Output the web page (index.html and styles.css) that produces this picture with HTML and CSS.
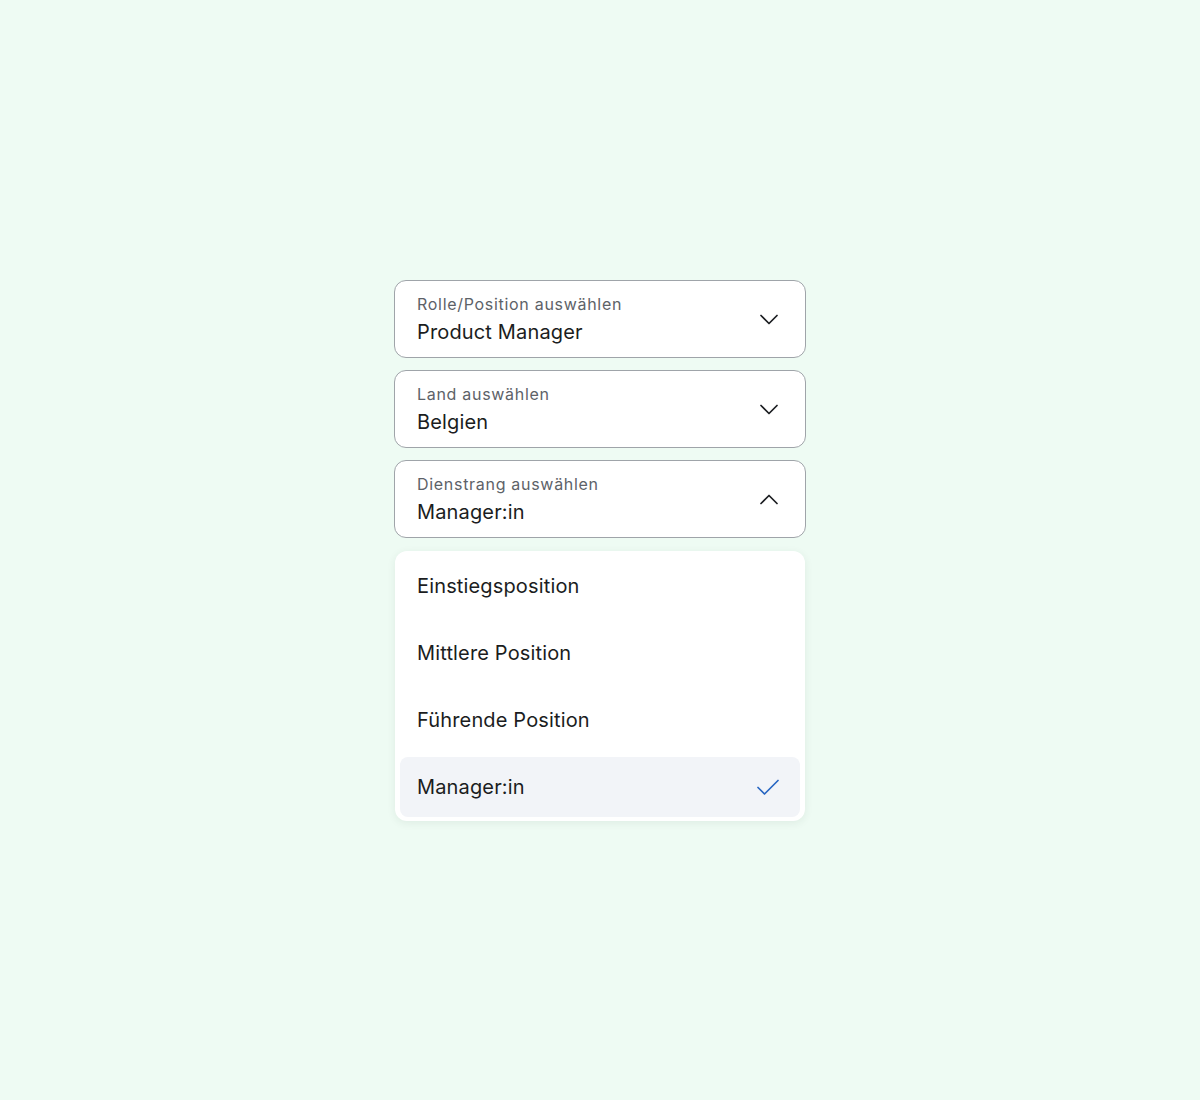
FILE: index.html
```html
<!DOCTYPE html>
<html lang="de">
<head>
    <meta charset="UTF-8">
    <meta name="viewport" content="width=device-width, initial-scale=1.0">
    <title>Auswahlfelder</title>
    <link rel="stylesheet" href="styles.css">
</head>
<body>
    <div class="form">
        <div class="select">
            <div class="select-text">
                <span class="label">Rolle/Position auswählen</span>
                <span class="value">Product Manager</span>
            </div>
            <svg class="chevron" viewBox="0 0 24 24" width="24" height="24"><path d="M4 8.5l8 8 8-8" /></svg>
        </div>

        <div class="select">
            <div class="select-text">
                <span class="label">Land auswählen</span>
                <span class="value">Belgien</span>
            </div>
            <svg class="chevron" viewBox="0 0 24 24" width="24" height="24"><path d="M4 8.5l8 8 8-8" /></svg>
        </div>

        <div class="select open">
            <div class="select-text">
                <span class="label">Dienstrang auswählen</span>
                <span class="value">Manager:in</span>
            </div>
            <svg class="chevron" viewBox="0 0 24 24" width="24" height="24"><path d="M4 16.5l8-8 8 8" /></svg>
        </div>

        <ul class="menu">
            <li class="option">Einstiegsposition</li>
            <li class="option">Mittlere Position</li>
            <li class="option">Führende Position</li>
            <li class="option selected">
                Manager:in
                <svg class="check" viewBox="0 0 24 24" width="24" height="24"><path d="M2 12.5l6.5 6.5L22 5.5" /></svg>
            </li>
        </ul>
    </div>
</body>
</html>
```

FILE: styles.css
```css
body {
    margin: 0;
    min-height: 100vh;
    display: flex;
    align-items: center;
    justify-content: center;
    background: #eefbf3;
    font-family: Inter, 'Noto Sans', sans-serif;
    color: #1b1d21;
}
.form {
    width: 412px;
    display: flex;
    flex-direction: column;
    gap: 12px;
}
.select {
    display: flex;
    align-items: center;
    justify-content: space-between;
    background: white;
    border: 1px solid #9fa4a9;
    border-radius: 12px;
    padding: 12px 24px 11px 22px;
}
.select-text {
    display: flex;
    flex-direction: column;
    gap: 3px;
}
.label {
    font-size: 16px;
    line-height: 22px;
    letter-spacing: 0.7px;
    color: #5d6268;
}
.value {
    font-size: 20px;
    line-height: 28px;
    letter-spacing: 0.15px;
}
.chevron {
    fill: none;
    stroke: #1b1d21;
    stroke-width: 1.7;
    stroke-linecap: round;
    stroke-linejoin: round;
}
.menu {
    list-style: none;
    margin: 1px 1px 0;
    padding: 5px 5px 4px;
    background: white;
    border-radius: 12px;
    box-shadow: 0 2px 8px rgba(40, 70, 55, 0.08);
    display: flex;
    flex-direction: column;
    gap: 7px;
}
.option {
    height: 60px;
    display: flex;
    align-items: center;
    justify-content: space-between;
    padding: 0 20px 0 17px;
    font-size: 20px;
    letter-spacing: 0.15px;
    border-radius: 8px;
}
.option.selected {
    background: #f2f4f8;
}
.check {
    fill: none;
    stroke: #2866c2;
    stroke-width: 1.7;
    stroke-linecap: round;
    stroke-linejoin: round;
}
```
